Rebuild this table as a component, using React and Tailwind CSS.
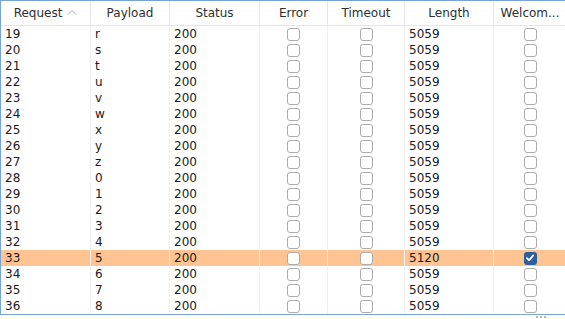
import React from "react";

const columns = [
  { key: "request", label: "Request", width: "w-[90px]", sort: true },
  { key: "payload", label: "Payload", width: "w-[79px]" },
  { key: "status", label: "Status", width: "w-[90px]" },
  { key: "error", label: "Error", width: "w-[68px]", check: true },
  { key: "timeout", label: "Timeout", width: "w-[77px]", check: true },
  { key: "length", label: "Length", width: "w-[89px]" },
  { key: "welcome", label: "Welcom...", width: "w-[72px]", check: true },
];

const payloads = "rstuvwxyz012345678".split("");

const rows = payloads.map((p, i) => {
  const n = 19 + i;
  const hit = n === 33;
  return {
    request: String(n),
    payload: p,
    status: "200",
    error: false,
    timeout: false,
    length: hit ? "5120" : "5059",
    welcome: hit,
    selected: hit,
  };
});

function Checkbox({ checked }) {
  if (checked) {
    return (
      <span className="w-[13px] h-[13px] rounded-[3px] bg-[#2b5f9e] flex items-center justify-center">
        <svg width="10" height="10" viewBox="0 0 10 10">
          <path
            d="M2 5.2 L4.1 7.3 L8.2 2.4"
            fill="none"
            stroke="white"
            strokeWidth="1.8"
            strokeLinecap="round"
            strokeLinejoin="round"
          />
        </svg>
      </span>
    );
  }
  return (
    <span className="w-[13px] h-[13px] rounded-[3px] border border-[#acacac] bg-white" />
  );
}

export default function App() {
  return (
    <div
      className="w-[565px] h-[319px] bg-white text-[12px] text-[#1a1a1a] overflow-hidden"
      style={{ fontFamily: '"DejaVu Sans", sans-serif' }}
    >
      <div className="border-t border-l border-b border-[#78a3d6]">
        {/* header */}
        <div className="flex h-[25px] border-b border-[#e4e4e4]">
          {columns.map((c) => (
            <div
              key={c.key}
              className={`${c.width} shrink-0 flex items-center justify-center border-r border-[#e6e6e6] text-[#2e2e2e] last:border-r-0`}
            >
              <span>{c.label}</span>
              {c.sort && (
                <svg width="10" height="6" viewBox="0 0 10 6" className="ml-[5px] mb-[2px]">
                  <path d="M1 5.5 L5 1.5 L9 5.5" fill="none" stroke="#a8a8a8" strokeWidth="1" />
                </svg>
              )}
            </div>
          ))}
        </div>

        {/* body */}
        {rows.map((r) => (
          <div
            key={r.request}
            className={`flex h-[16px] ${r.selected ? "bg-[#ffc491]" : "bg-white"}`}
          >
            {columns.map((c) => (
              <div
                key={c.key}
                className={`${c.width} shrink-0 flex items-center border-r border-[#f1f1f1] last:border-r-0 ${
                  c.check ? "justify-center" : "pl-[4px]"
                }`}
              >
                {c.check ? <Checkbox checked={r[c.key]} /> : <span className="leading-[16px]">{r[c.key]}</span>}
              </div>
            ))}
          </div>
        ))}
      </div>

      {/* resize grip */}
      <div className="flex justify-end pr-[19px] pt-[1px] gap-[2px]">
        <span className="w-[2px] h-[2px] rounded-full bg-[#a0a0a0]" />
        <span className="w-[2px] h-[2px] rounded-full bg-[#a0a0a0]" />
        <span className="w-[2px] h-[2px] rounded-full bg-[#a0a0a0]" />
      </div>
    </div>
  );
}
